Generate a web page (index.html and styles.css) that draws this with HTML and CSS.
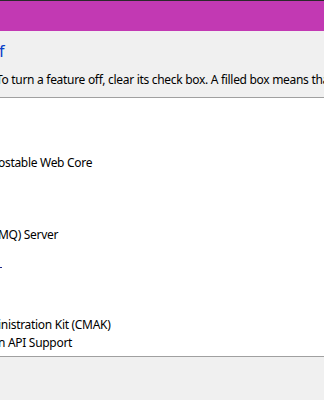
FILE: index.html
```html
<!DOCTYPE html>
<html>
<head>
<meta charset="utf-8">
<link rel="stylesheet" href="styles.css">
</head>
<body>
<div class="window">
  <div class="titlebar"></div>
  <div class="header">
    <div class="heading">f</div>
    <div class="desc">To turn a feature off, clear its check box. A filled box means tha</div>
  </div>
  <div class="list">
    <div class="row"></div>
    <div class="row"></div>
    <div class="row"></div>
    <div class="row"><span class="cut">ostable Web Core</span></div>
    <div class="row"></div>
    <div class="row"></div>
    <div class="row"></div>
    <div class="row"><span class="cut">MQ) Server</span></div>
    <div class="row"></div>
    <div class="row"><span class="dot"></span></div>
    <div class="row"></div>
    <div class="row"></div>
    <div class="row"><span class="cut">inistration Kit (CMAK)</span></div>
    <div class="row"><span class="cut">n API Support</span></div>
  </div>
  <div class="footer"></div>
</div>
</body>
</html>
```
FILE: styles.css
```css
html, body {
  margin: 0;
  padding: 0;
  width: 324px;
  height: 400px;
  overflow: hidden;
  background: #f0f0f0;
}
.window {
  display: flex;
  flex-direction: column;
  height: 400px;
  font-family: "Noto Sans", "Open Sans", sans-serif;
  color: #000;
}
.titlebar {
  height: 31px;
  background: #c239b3;
  border-top: 1px solid #2a2a2a;
  box-sizing: border-box;
  flex: none;
}
.header {
  height: 66px;
  flex: none;
  background: #f0f0f0;
  box-sizing: border-box;
  padding-top: 9px;
}
.heading {
  font-size: 16px;
  line-height: 22px;
  color: #0a3fc8;
  margin-left: -1px;
}
.desc {
  font-size: 12px;
  line-height: 16px;
  margin-top: 10px;
  margin-left: -4px;
  white-space: nowrap;
  letter-spacing: -0.3px;
}
.list {
  flex: none;
  height: 260px;
  background: #fff;
  border-top: 1px solid #a0a0a0;
  border-bottom: 1px solid #a0a0a0;
  box-sizing: border-box;
  padding-top: 1px;
  display: flex;
  flex-direction: column;
}
.row {
  height: 18px;
  display: flex;
  align-items: center;
  font-size: 12px;
  white-space: nowrap;
  letter-spacing: -0.3px;
}
.cut {
  margin-left: -2px;
}
.dot {
  display: block;
  width: 2px;
  height: 1px;
  background: #1a2a8a;
  margin-top: -6px;
}
.footer {
  flex: 1;
  background: #f0f0f0;
}
```
